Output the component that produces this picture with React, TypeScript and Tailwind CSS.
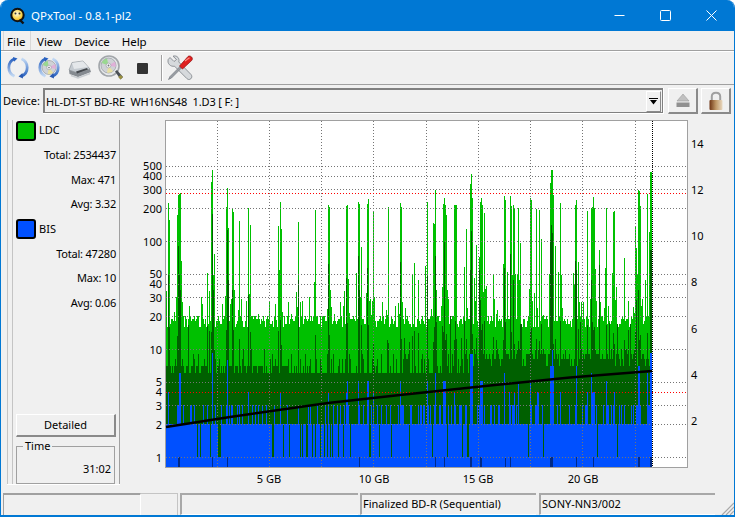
const FONT = "font-['Noto_Sans',sans-serif]";

// y position on the log scale of the left axis
const logY = (v: number) => 457 - 108 * Math.log10(v);

const mulberry = (seed: number) => () => {
  seed = (seed + 0x6d2b79f5) | 0;
  let t = Math.imul(seed ^ (seed >>> 15), 1 | seed);
  t = (t + Math.imul(t ^ (t >>> 7), 61 | t)) ^ t;
  return ((t ^ (t >>> 14)) >>> 0) / 4294967296;
};

// [x, top y] of the tall LDC spikes
const LDC_PEAKS: [number, number][] = [
  [168, 203], [169, 220], [177, 215], [178, 195], [179, 194], [180, 193], [207, 273], [211, 182], [212, 170], [213, 275],
  [226, 207], [227, 188], [228, 228], [232, 208], [233, 212], [239, 221], [248, 208], [250, 225], [278, 226], [280, 202],
  [281, 229], [298, 222], [315, 210], [328, 205], [329, 207], [346, 206], [347, 205], [358, 202], [359, 204], [361, 247],
  [367, 204], [368, 199], [373, 212], [388, 207], [400, 203], [401, 207], [412, 274], [414, 263], [418, 280], [427, 202],
  [433, 223], [434, 224], [435, 190], [443, 204], [444, 198], [445, 205], [446, 215], [454, 205], [455, 205], [456, 205],
  [464, 267], [466, 229], [470, 184], [471, 174], [472, 198], [476, 245], [479, 257], [480, 202], [481, 198], [482, 205],
  [484, 213], [493, 275], [503, 264], [504, 196], [505, 200], [510, 196], [511, 206], [513, 205], [514, 208], [518, 208],
  [520, 243], [530, 198], [531, 200], [536, 209], [539, 210], [541, 239], [550, 183], [551, 170], [552, 170], [553, 195],
  [555, 246], [560, 203], [575, 205], [576, 200], [578, 262], [587, 211], [591, 208], [592, 207], [593, 197], [594, 208],
  [599, 250], [606, 208], [613, 212], [614, 211], [624, 258], [635, 226], [636, 248], [638, 190], [639, 191], [640, 206],
  [647, 194], [650, 172], [651, 172],
];

// dark green spikes
const DARK_PEAKS: [number, number][] = [
  [168, 275], [178, 246], [179, 275], [180, 290], [212, 214], [213, 290], [227, 230], [228, 280], [232, 290], [248, 295],
  [280, 320], [298, 280], [328, 264], [346, 278], [358, 256], [359, 290], [367, 268], [400, 262], [427, 276], [435, 256],
  [444, 242], [470, 270], [471, 231], [479, 270], [480, 300], [504, 268], [510, 254], [513, 280], [550, 240], [551, 225],
  [552, 233], [575, 261], [576, 270], [591, 280], [599, 265], [636, 300], [638, 290], [650, 250], [651, 250],
];

// blue spikes above the solid base
const BLUE_PEAKS: [number, number][] = [
  [168, 392], [179, 373], [180, 373], [212, 353], [227, 360], [248, 392], [280, 392], [328, 392], [346, 392], [347, 381],
  [358, 381], [367, 381], [368, 381], [373, 392], [400, 381], [427, 381], [434, 405], [435, 373], [443, 381], [444, 381],
  [445, 381], [454, 392], [470, 354], [471, 354], [472, 354], [480, 381], [481, 381], [482, 381], [504, 373], [509, 392],
  [514, 392], [518, 382], [530, 381], [537, 392], [538, 392], [550, 366], [551, 366], [552, 350], [553, 366], [560, 392],
  [576, 366], [587, 392], [591, 373], [592, 392], [593, 392], [594, 392], [606, 381], [614, 392], [638, 366], [639, 366],
  [647, 373], [650, 353], [651, 353],
];

// columns where BIS drops to 1 and the dark green shows through
const SLIVERS = [
  197, 200, 210, 218, 219, 220, 272, 273, 283, 289, 300, 302, 306, 307, 312, 315, 320, 324, 327, 330, 332, 338, 343, 350,
  369, 370, 379, 391, 409, 432, 447, 462, 467, 468, 528, 543, 597, 617,
];

const DARK_BLUE = [178, 179, 212, 227, 359, 435, 444, 470, 471, 480, 481, 505, 510, 550, 551, 552, 576, 593, 638, 639, 650, 651];

const { light, dark, blue, deep } = (() => {
  const rnd = mulberry(4711);
  const peaks = new Map(LDC_PEAKS);
  const darkPeaks = new Map(DARK_PEAKS);
  const bluePeaks = new Map(BLUE_PEAKS);
  let light = "";
  let dark = "";
  let blue = "";
  let deep = "";
  for (let x = 166; x < 652; x++) {
    let v = 16 + Math.floor(rnd() * 5);
    const a = rnd();
    if (a < 0.03) v = 32 + Math.floor(rnd() * 18);
    else if (a < 0.16) v = 21 + Math.floor(rnd() * 10);
    let ldcTop = logY(v);
    for (const d of [-2, -1, 1, 2]) {
      const p = peaks.get(x + d);
      if (p !== undefined && rnd() < 0.4) ldcTop = Math.min(ldcTop, p + 60 + rnd() * 50);
    }
    ldcTop = peaks.get(x) ?? ldcTop;

    let dv: number;
    const b = rnd();
    if (x < 290) dv = b < 0.62 ? 7 : b < 0.85 ? 6 : 8 + Math.floor(rnd() * 3);
    else if (x < 470) dv = b < 0.6 ? 6 : b < 0.9 ? 7 + Math.floor(rnd() * 2) : 9;
    else dv = b < 0.4 ? 8 : b < 0.72 ? 9 : b < 0.9 ? 7 : 10;
    let darkTop = logY(dv);
    const spikeChance = x > 490 ? 0.07 : x > 430 ? 0.05 : 0.025;
    if (rnd() < spikeChance) darkTop = 305 + rnd() * 40;
    if (peaks.has(x) && !darkPeaks.has(x)) darkTop = Math.min(darkTop, 320 + rnd() * 25);
    darkTop = darkPeaks.get(x) ?? darkTop;
    darkTop = Math.max(darkTop, ldcTop);

    let blueTop = rnd() < 0.24 ? 405 : 424;
    blueTop = bluePeaks.get(x) ?? blueTop;
    if (SLIVERS.includes(x)) blueTop = 457;

    light += `M${x + 0.5} ${ldcTop}V467`;
    dark += `M${x + 0.5} ${darkTop}V467`;
    blue += `M${x + 0.5} ${blueTop}V467`;
    if (DARK_BLUE.includes(x)) deep += `M${x + 0.5} 457V467`;
  }
  return { light, dark, blue, deep };
})();

const LEFT_TICKS = [1, 2, 3, 4, 5, 10, 20, 30, 40, 50, 100, 200, 300, 400, 500];
const RIGHT_TICKS: [string, number][] = [["14", 144], ["12", 190], ["10", 236], ["8", 282], ["6", 329], ["4", 375], ["2", 421]];
const GB_TICKS: [string, number][] = [["5 GB", 269], ["10 GB", 374], ["15 GB", 478], ["20 GB", 583]];
const V_GRID = [217, 269, 321, 373, 426, 478, 530, 582, 635];

function Chart() {
  return (
    <svg width="614" height="372" viewBox="121 118 614 372" className="shrink-0" fontFamily="'Noto Sans', sans-serif" fontSize="11">
      <rect x="165.5" y="120.5" width="522" height="347" fill="#ffffff" stroke="#a0a0a0" />
      <g shapeRendering="crispEdges" fill="none" strokeWidth="1">
        <path d={light} stroke="#00c000" />
        <path d={dark} stroke="#006000" />
        <path d={blue} stroke="#0050ff" />
        <path d={deep} stroke="#002a88" />
        {LEFT_TICKS.map((t) => (
          <path key={t} d={`M166 ${Math.round(logY(t)) + 0.5}H687`} stroke="#757575" strokeDasharray="1 2" />
        ))}
        {V_GRID.map((x) => (
          <path key={x} d={`M${x + 0.5} 121V467`} stroke="#757575" strokeDasharray="1 2" />
        ))}
        <path d="M166 193.5H687M166 392.5H687" stroke="#ff0000" strokeDasharray="1 2" />
        <path d="M652.5 121V467" stroke="#000000" strokeDasharray="1 1" />
      </g>
      <polyline points="166,427 230,417 328,403 400,395 490,385.5 570,377.5 652,371" fill="none" stroke="#000000" strokeWidth="2.4" />
      {LEFT_TICKS.map((t) => (
        <text key={t} x="162" y={logY(t) + 4.5} textAnchor="end" fill="#000000">{t}</text>
      ))}
      {RIGHT_TICKS.map(([t, y]) => (
        <text key={t} x="691" y={y + 4} fill="#000000">{t}</text>
      ))}
      {GB_TICKS.map(([t, x]) => (
        <text key={t} x={x} y="483" textAnchor="middle" fill="#000000">{t}</text>
      ))}
    </svg>
  );
}

function LogoIcon() {
  return (
    <svg width="16" height="18" viewBox="0 0 16 18">
      <defs>
        <radialGradient id="logoFill" cx="0.45" cy="0.4" r="0.6">
          <stop offset="0" stopColor="#fffbe0" />
          <stop offset="0.7" stopColor="#f8d040" />
          <stop offset="1" stopColor="#d89010" />
        </radialGradient>
      </defs>
      <circle cx="7.5" cy="8" r="6.2" fill="url(#logoFill)" stroke="#111111" strokeWidth="2" />
      <circle cx="5.5" cy="6.5" r="1" fill="#333333" />
      <circle cx="9.5" cy="6.5" r="1" fill="#333333" />
      <path d="M9.5 12.5L13.5 16.5" stroke="#111111" strokeWidth="2.4" />
    </svg>
  );
}

function RefreshArcs({ id }: { id: string }) {
  return (
    <>
      <defs>
        <linearGradient id={`${id}a`} x1="0" y1="0" x2="0" y2="1">
          <stop offset="0" stopColor="#2a62c0" />
          <stop offset="1" stopColor="#c4daf4" />
        </linearGradient>
        <linearGradient id={`${id}b`} x1="0" y1="0" x2="0" y2="1">
          <stop offset="0" stopColor="#c4daf4" />
          <stop offset="1" stopColor="#2a62c0" />
        </linearGradient>
      </defs>
      <path d="M8.5 2.8A9.5 9.5 0 0 0 8.5 20.2" fill="none" stroke={`url(#${id}a)`} strokeWidth="2.8" />
      <path d="M7 1L11.5 2.5L8 5.8Z" fill="#2a62c0" />
      <path d="M15.5 2.8A9.5 9.5 0 0 1 15.5 20.2" fill="none" stroke={`url(#${id}b)`} strokeWidth="2.8" />
      <path d="M16.5 17L17 22.5L12.5 20.5Z" fill="#2a5ab0" />
    </>
  );
}

function Disc({ cx, cy, r }: { cx: number; cy: number; r: number }) {
  return (
    <>
      <circle cx={cx} cy={cy} r={r} fill="#cfd2d6" stroke="#8a8f96" strokeWidth="0.6" />
      <path d={`M${cx} ${cy}L${cx - r * 0.9} ${cy - r * 0.35}A${r} ${r} 0 0 1 ${cx - r * 0.2} ${cy - r * 0.95}Z`} fill="#9ad890" />
      <path d={`M${cx} ${cy}L${cx + r * 0.85} ${cy - r * 0.5}A${r} ${r} 0 0 1 ${cx + r * 0.95} ${cy + r * 0.2}Z`} fill="#e0b0d8" />
      <path d={`M${cx} ${cy}L${cx - r * 0.2} ${cy + r * 0.95}A${r} ${r} 0 0 0 ${cx + r * 0.6} ${cy + r * 0.75}Z`} fill="#e8e0a0" />
      <circle cx={cx} cy={cy} r={r * 0.32} fill="#f4f4f4" stroke="#8a8f96" strokeWidth="0.5" />
      <circle cx={cx} cy={cy} r={r * 0.12} fill="#70757c" />
    </>
  );
}

function DriveIcon() {
  return (
    <svg width="24" height="24" viewBox="0 0 24 24">
      <path d="M1 14L4 6.5L15 5L22 13L10 17Z" fill="#c4cad0" stroke="#858b92" strokeWidth="0.6" />
      <path d="M4 7L15 5.2L20 11L6 13Z" fill="#e4e7ea" />
      <path d="M1 14L10 17L22 13L23 16L10 21L1.5 18Z" fill="#858a90" />
      <path d="M8 15.5L19 12L20 13.5L9 17.5Z" fill="#44484d" />
      <path d="M3 19.5L10 22L22 17.5" fill="none" stroke="#c8ccd0" strokeWidth="1.4" />
    </svg>
  );
}

function SearchIcon() {
  return (
    <svg width="26" height="26" viewBox="0 0 26 26">
      <circle cx="11" cy="11" r="10" fill="#e6e8ea" stroke="#a2a6aa" strokeWidth="1.6" />
      <Disc cx={10.5} cy={10.5} r={7.5} />
      <path d="M17 16.5L19 15L25 22L22.5 24.5Z" fill="#4a4f55" />
      <path d="M22.5 20L25 22L22.5 24.5L20.2 22Z" fill="#9a9040" />
    </svg>
  );
}

function ToolsIcon() {
  return (
    <svg width="26" height="26" viewBox="0 0 26 26">
      <path d="M3 2.5L7 6.5L9.5 4.5L6 1.2C9 0.2 12 2 12 5.5L11.8 7L24 19.5C25.2 21 25 22.6 23.8 23.8C22.4 25 21 24.6 19.8 23.5L7.5 11.2C3.5 12 0 8.5 1.2 4.5Z" fill="#d6d9dc" stroke="#7a7f85" strokeWidth="0.8" />
      <path d="M13 11.5L3 21.5L1.5 24.5L4.5 23L14.5 13Z" fill="#9a9ea4" stroke="#6a6f75" strokeWidth="0.6" />
      <path d="M12.5 11L21 1.5C22 0.6 23.6 1 24.6 2C25.6 3.2 25.6 4.6 24.6 5.6L15.5 14Z" fill="#e02020" stroke="#8e1010" strokeWidth="0.7" />
      <path d="M18 6L22.5 2.8" stroke="#ff8a80" strokeWidth="1.2" />
    </svg>
  );
}

function ToolBar() {
  return (
    <div className="flex items-center h-[33px] shrink-0 border-b border-[#a0a0a0] relative">
      <svg width="24" height="24" viewBox="0 0 24 24" className="ml-[5px]"><RefreshArcs id="r1" /></svg>
      <svg width="24" height="24" viewBox="0 0 24 24" className="ml-[7px]">
        <Disc cx={12} cy={11.5} r={7} />
        <RefreshArcs id="r2" />
      </svg>
      <div className="ml-[7px]"><DriveIcon /></div>
      <div className="ml-[6px]"><SearchIcon /></div>
      <div className="ml-[13px] w-[11px] h-[11px] bg-[#333333] rounded-[1px]" />
      <div className="ml-[13px] w-px h-[26px] bg-[#a0a0a0] border-r border-white box-content" />
      <div className="ml-[4px]"><ToolsIcon /></div>
    </div>
  );
}

function Bevel({ className, children }: { className: string; children?: React.ReactNode }) {
  return (
    <div className={`flex items-center justify-center bg-[#f0f0f0] border-t border-l border-white border-r-2 border-b-2 border-r-[#8a8a8a] border-b-[#8a8a8a] ${className}`}>
      {children}
    </div>
  );
}

function DeviceBar() {
  return (
    <div className="flex h-[33px] shrink-0 pt-[3px] items-start">
      <span className="ml-[2px] w-[40px] h-[26px] flex items-center text-[11px] whitespace-nowrap">Device:</span>
      <div className="w-[621px] h-[26px] border-b border-r border-white">
        <div className="h-full border-t-2 border-l-2 border-r border-b border-[#808080] flex items-center justify-between pl-[1px] pr-[1px]">
          <span className="text-[11px] tracking-[-0.15px] whitespace-pre leading-none">HL-DT-ST BD-RE  WH16NS48  1.D3 [ F: ]</span>
          <Bevel className="w-[15px] h-[21px] !border-r !border-b">
            <svg width="9" height="7" viewBox="0 0 9 7"><path d="M0 0H9V1H0ZM1 2H8L4.5 6.5Z" fill="#000000" /></svg>
          </Bevel>
        </div>
      </div>
      <Bevel className="ml-[4px] w-[30px] h-[26px]">
        <svg width="16" height="14" viewBox="0 0 16 14">
          <path d="M8 0L14 7H2Z" fill="#c0c0c0" stroke="#9c9c9c" strokeWidth="0.6" />
          <rect x="1.5" y="8.5" width="13" height="4.5" fill="#909090" />
        </svg>
      </Bevel>
      <Bevel className="ml-[3px] w-[30px] h-[26px]">
        <svg width="16" height="20" viewBox="0 0 16 20">
          <defs>
            <linearGradient id="lockBody" x1="0" y1="0" x2="1" y2="0">
              <stop offset="0" stopColor="#6e3414" />
              <stop offset="0.5" stopColor="#c09868" />
              <stop offset="1" stopColor="#e8d8c0" />
            </linearGradient>
          </defs>
          <path d="M3.8 9V5.5C3.8 0.5 12.2 0.5 12.2 5.5V9" fill="none" stroke="#a0a0a0" strokeWidth="2" />
          <rect x="1.5" y="9" width="13" height="10" rx="1" fill="url(#lockBody)" />
        </svg>
      </Bevel>
    </div>
  );
}

function StatRow({ children }: { children: React.ReactNode }) {
  return <div className="h-[24.5px] flex items-center justify-end text-[11px] tracking-[-0.2px] whitespace-nowrap">{children}</div>;
}

function Legend({ color, label }: { color: string; label: string }) {
  return (
    <div className="flex items-center h-[21px]">
      <div className={`w-[20px] h-[20px] rounded-[3px] border-2 border-black ${color}`} />
      <span className="ml-[3px] text-[11px]">{label}</span>
    </div>
  );
}

function SidePanel() {
  return (
    <div className="flex ml-[6px] mr-[1px] mt-[2px] h-[365px] shrink-0 border-b border-white">
      <div className="w-[6px] border-l border-r border-[#c4c4c4]" />
      <div className="w-[107px] pl-[3px] pr-[3px] border-r border-[#a0a0a0] flex flex-col">
        <Legend color="bg-[#00c000]" label="LDC" />
        <div className="h-[2px] shrink-0" />
        <StatRow>Total: 2534437</StatRow>
        <StatRow>Max: 471</StatRow>
        <StatRow>Avg: 3.32</StatRow>
        <div className="h-[2px] shrink-0" />
        <Legend color="bg-[#0050ff]" label="BIS" />
        <div className="h-[2px] shrink-0" />
        <StatRow>Total: 47280</StatRow>
        <StatRow>Max: 10</StatRow>
        <StatRow>Avg: 0.06</StatRow>
        <div className="flex-1" />
        <Bevel className="h-[23px] w-[100px] text-[11px] shrink-0">Detailed</Bevel>
        <fieldset className="mt-[2px] w-[99px] h-[45px] shrink-0 border border-[#a0a0a0] pr-[3px]">
          <legend className="ml-[6px] px-[2px] text-[11px] leading-[14px]">Time</legend>
          <div className="text-right text-[11px] mt-[9px] leading-[14px]">31:02</div>
        </fieldset>
      </div>
    </div>
  );
}

function StatusBar() {
  return (
    <div className="flex flex-1 pt-[3px] pl-[2px] text-[11px] min-h-0">
      <div className="w-[138px] border-t-2 border-l border-[#a0a0a0] border-r border-r-white" />
      <div className="w-[37px] border-t border-r border-[#c4c4c4]" />
      <div className="ml-[2px] w-[178px] border-t-2 border-l-2 border-[#a8a8a8] border-b border-b-white" />
      <div className="ml-[2px] w-[176px] border-t-2 border-l-2 border-[#a8a8a8] border-b border-b-white pl-[1px] flex items-center whitespace-nowrap">Finalized BD-R (Sequential)</div>
      <div className="ml-[3px] w-[176px] border-t-2 border-l-2 border-[#a8a8a8] border-b border-b-white pl-[1px] flex items-center">SONY-NN3/002</div>
      <div className="flex-1 flex items-end justify-end">
        <svg width="13" height="13" viewBox="0 0 13 13">
          <path d="M13 1L1 13M13 5L5 13M13 9L9 13" stroke="#a8a8a8" strokeWidth="1.2" />
        </svg>
      </div>
    </div>
  );
}

export default function App() {
  return (
    <div className="bg-white w-[735px] h-[517px]">
      <div className={`w-[735px] h-[517px] flex flex-col overflow-hidden rounded-t-[8px] bg-[#f0f0f0] border-x border-b-2 border-[#0078d4] text-black ${FONT}`}>
        {/* Title bar */}
        <div className="h-[31px] shrink-0 bg-[#0078d4] flex items-center text-white">
          <div className="ml-[9px] w-[21px]"><LogoIcon /></div>
          <span className="text-[11.5px]">QPxTool - 0.8.1-pl2</span>
          <div className="ml-auto flex">
            <div className="w-[46px] h-[31px] flex items-center justify-center">
              <svg width="11" height="11" viewBox="0 0 11 11"><path d="M0.5 5.5H10.5" stroke="#ffffff" /></svg>
            </div>
            <div className="w-[46px] h-[31px] flex items-center justify-center">
              <svg width="11" height="11" viewBox="0 0 11 11"><rect x="0.5" y="0.5" width="10" height="10" rx="1" fill="none" stroke="#ffffff" /></svg>
            </div>
            <div className="w-[46px] h-[31px] flex items-center justify-center">
              <svg width="11" height="11" viewBox="0 0 11 11"><path d="M0.5 0.5L10.5 10.5M10.5 0.5L0.5 10.5" stroke="#ffffff" /></svg>
            </div>
          </div>
        </div>

        {/* Menu */}
        <div className="h-[21px] shrink-0 flex text-[11.5px] border-b border-white">
          <div className="h-[20px] w-full flex border-b border-[#a0a0a0]">
            <div className="ml-[2px] w-[28px] pl-[3px] pt-[2px] border-l border-r border-[#d8d8d8]">File</div>
            <div className="ml-[6px] pt-[2px]">View</div>
            <div className="ml-[12px] pt-[2px]">Device</div>
            <div className="ml-[12px] pt-[2px]">Help</div>
          </div>
        </div>

        <ToolBar />
        <DeviceBar />

        <div className="flex h-[372px] shrink-0">
          <SidePanel />
          <Chart />
        </div>

        <StatusBar />
      </div>
    </div>
  );
}
